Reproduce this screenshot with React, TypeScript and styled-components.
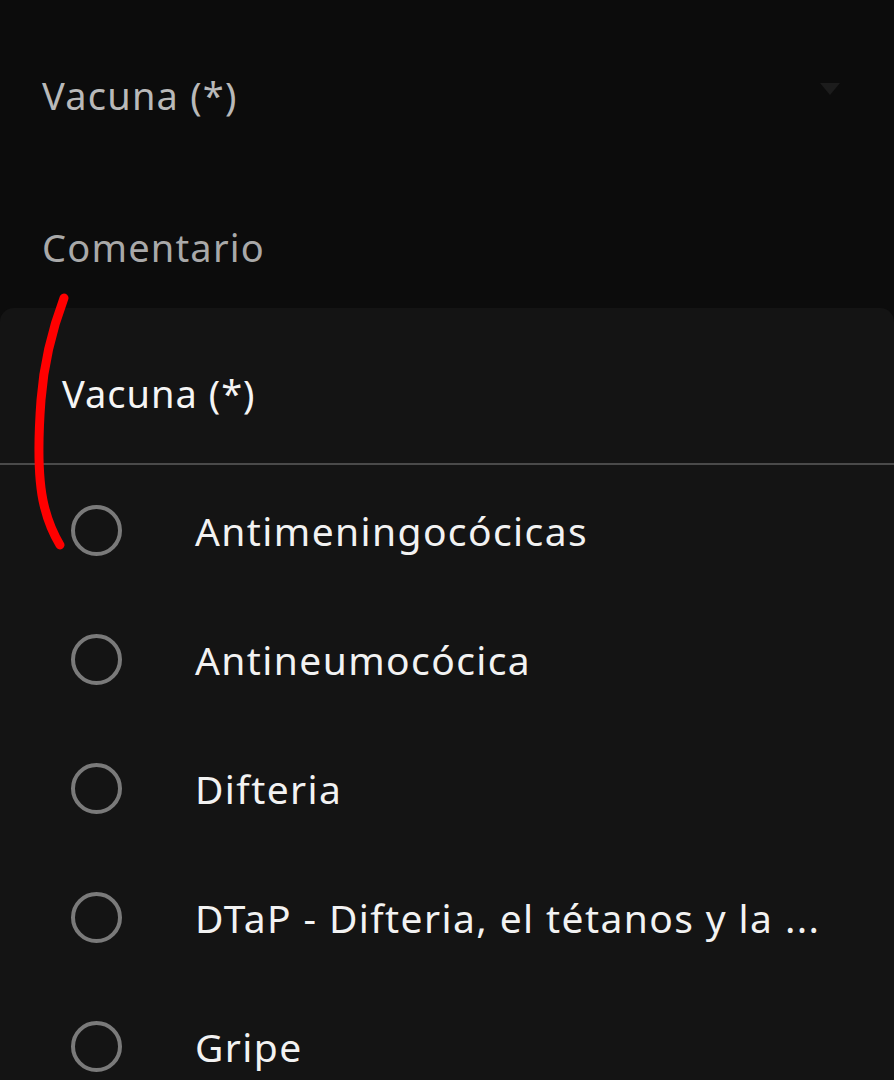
import React from 'react';
import styled, { createGlobalStyle } from 'styled-components';

const GlobalStyle = createGlobalStyle`
  html, body {
    margin: 0;
    padding: 0;
    background: #0c0c0c;
  }
  body {
    font-family: 'Noto Sans', 'DejaVu Sans', sans-serif;
  }
`;

const options = [
  'Antimeningocócicas',
  'Antineumocócica',
  'Difteria',
  'DTaP - Difteria, el tétanos y la ...',
  'Gripe',
];

const App: React.FC = () => {
  return (
    <>
      <GlobalStyle />
      <Page>
        <Form>
          <Field>
            <FieldLabel>Vacuna (*)</FieldLabel>
            <Caret viewBox="0 0 20 12">
              <path d="M0 0 L20 0 L10 12 Z" fill="#1c1c1c" />
            </Caret>
          </Field>
          <Field $height={138} $offset={16}>
            <FieldLabel $dim>Comentario</FieldLabel>
          </Field>
        </Form>
        <Sheet>
          <SheetHeader>
            <SheetTitle>Vacuna (*)</SheetTitle>
          </SheetHeader>
          <Divider />
          <OptionList>
            {options.map((label) => (
              <OptionRow key={label}>
                <Radio />
                <OptionText>{label}</OptionText>
              </OptionRow>
            ))}
          </OptionList>
        </Sheet>
        <Mark viewBox="0 0 894 1080">
          <path
            d="M64 298 C52 330 44 360 41 400 C38 440 38 480 44 505 C48 522 54 535 60 545"
            fill="none"
            stroke="#ff0000"
            strokeWidth="9"
            strokeLinecap="round"
          />
        </Mark>
      </Page>
    </>
  );
};

const Page = styled.div`
  position: relative;
  width: 894px;
  height: 1080px;
  overflow: hidden;
  background: #0c0c0c;
  display: flex;
  flex-direction: column;
`;

const Form = styled.div`
  display: flex;
  flex-direction: column;
  padding: 20px 42px 0 42px;
`;

const Field = styled.div<{ $height?: number; $offset?: number }>`
  height: ${(p) => p.$height ?? 150}px;
  display: flex;
  align-items: center;
  justify-content: space-between;
  padding-top: ${(p) => p.$offset ?? 0}px;
  box-sizing: border-box;
`;

const FieldLabel = styled.span<{ $dim?: boolean }>`
  font-size: 38px;
  letter-spacing: 1.2px;
  color: ${(p) => (p.$dim ? '#a9a9a9' : '#b9b9b9')};
`;

const Caret = styled.svg`
  width: 20px;
  height: 12px;
  margin-right: 12px;
  margin-top: -12px;
`;

const Sheet = styled.div`
  flex: 1;
  background: #141414;
  border-radius: 14px 14px 0 0;
  display: flex;
  flex-direction: column;
`;

const SheetHeader = styled.div`
  height: 155px;
  padding: 14px 0 0 62px;
  box-sizing: border-box;
  display: flex;
  align-items: center;
`;

const SheetTitle = styled.span`
  font-size: 38px;
  letter-spacing: 1px;
  color: #f5f5f5;
`;

const Divider = styled.div`
  height: 1.5px;
  background: #4a4a4a;
`;

const OptionList = styled.div`
  display: flex;
  flex-direction: column;
  padding-top: 1px;
`;

const OptionRow = styled.div`
  height: 129px;
  display: flex;
  align-items: center;
  padding-left: 71px;
`;

const Radio = styled.span`
  width: 51px;
  height: 51px;
  box-sizing: border-box;
  border: 4px solid #7a7a7a;
  border-radius: 50%;
  flex-shrink: 0;
`;

const OptionText = styled.span`
  margin-left: 73px;
  font-size: 39px;
  letter-spacing: 1.4px;
  color: #f2f2f2;
  white-space: nowrap;
`;

const Mark = styled.svg`
  position: absolute;
  inset: 0;
  width: 894px;
  height: 1080px;
  pointer-events: none;
`;

export default App;
